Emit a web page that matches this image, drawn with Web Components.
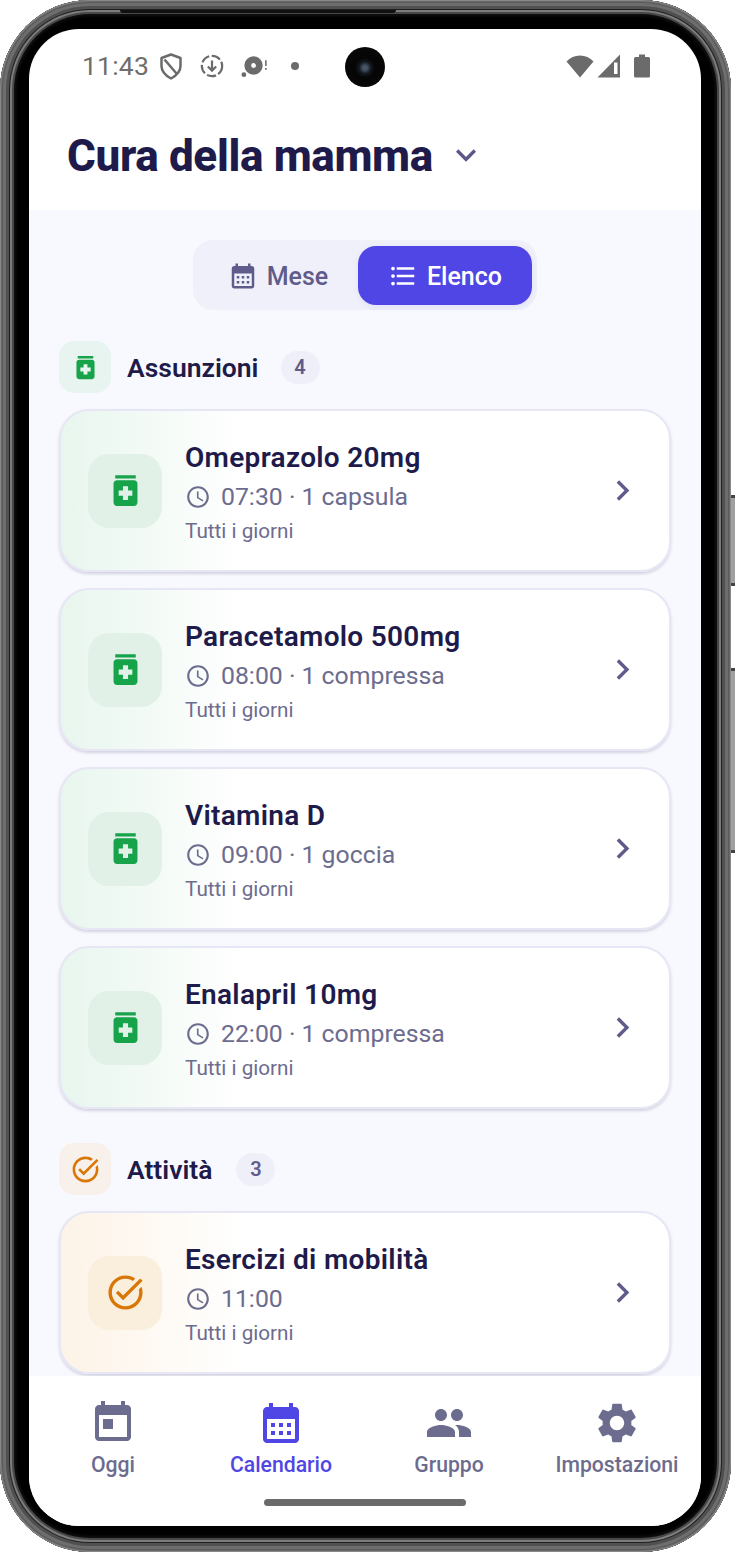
<!DOCTYPE html>
<html lang="it">
<head>
<meta charset="utf-8">
<title>Cura della mamma</title>
<style>
  html, body { margin: 0; background: #fff; }
  body { width: 735px; height: 1553px; overflow: hidden; font-family: Roboto, "Liberation Sans", sans-serif; }
</style>
</head>
<body>
<phone-frame>
  <status-bar></status-bar>
  <app-header>Cura della mamma</app-header>
  <main-area>
    <view-toggle></view-toggle>
    <item-section label="Assunzioni" count="4" tone="green">
      <item-card tone="green" time="07:30 · 1 capsula" note="Tutti i giorni">Omeprazolo 20mg</item-card>
      <item-card tone="green" time="08:00 · 1 compressa" note="Tutti i giorni">Paracetamolo 500mg</item-card>
      <item-card tone="green" time="09:00 · 1 goccia" note="Tutti i giorni">Vitamina D</item-card>
      <item-card tone="green" time="22:00 · 1 compressa" note="Tutti i giorni">Enalapril 10mg</item-card>
    </item-section>
    <item-section label="Attività" count="3" tone="orange">
      <item-card tone="orange" time="11:00" note="Tutti i giorni">Esercizi di mobilità</item-card>
    </item-section>
  </main-area>
  <bottom-nav></bottom-nav>
</phone-frame>

<script>
const ICONS = {
    today: 'M19 3h-1V1h-2v2H8V1H6v2H5c-1.11 0-1.99.9-1.99 2L3 19c0 1.1.89 2 2 2h14c1.1 0 2-.9 2-2V5c0-1.1-.9-2-2-2zm0 16H5V8h14v11zM7 10h5v5H7z',
    calendar: 'M19 4h-1V2h-2v2H8V2H6v2H5c-1.11 0-1.99.9-1.99 2L3 20c0 1.1.89 2 2 2h14c1.1 0 2-.9 2-2V6c0-1.1-.9-2-2-2zm0 16H5V10h14v10zM9 14H7v-2h2v2zm4 0h-2v-2h2v2zm4 0h-2v-2h2v2zm-8 4H7v-2h2v2zm4 0h-2v-2h2v2zm4 0h-2v-2h2v2z',
    people: 'M16 11c1.66 0 2.99-1.34 2.99-3S17.66 5 16 5c-1.66 0-3 1.34-3 3s1.34 3 3 3zm-8 0c1.66 0 2.99-1.34 2.99-3S9.66 5 8 5C6.34 5 5 6.34 5 8s1.34 3 3 3zm0 2c-2.33 0-7 1.17-7 3.5V19h14v-2.5c0-2.33-4.67-3.5-7-3.5zm8 0c-.29 0-.62.02-.97.05 1.16.84 1.97 1.97 1.97 3.45V19h6v-2.5c0-2.33-4.67-3.5-7-3.5z',
    settings: 'M19.14 12.94c.04-.3.06-.61.06-.94 0-.32-.02-.64-.07-.94l2.03-1.58c.18-.14.23-.41.12-.61l-1.92-3.32c-.12-.22-.37-.29-.59-.22l-2.39.96c-.5-.38-1.03-.7-1.62-.94l-.36-2.54c-.04-.24-.24-.41-.48-.41h-3.84c-.24 0-.43.17-.47.41l-.36 2.54c-.59.24-1.13.57-1.62.94l-2.39-.96c-.22-.08-.47 0-.59.22L2.74 8.87c-.12.21-.08.47.12.61l2.03 1.58c-.05.3-.09.63-.09.94s.02.64.07.94l-2.03 1.58c-.18.14-.23.41-.12.61l1.92 3.32c.12.22.37.29.59.22l2.39-.96c.5.38 1.03.7 1.62.94l.36 2.54c.05.24.24.41.48.41h3.84c.24 0 .44-.17.47-.41l.36-2.54c.59-.24 1.13-.56 1.62-.94l2.39.96c.22.08.47 0 .59-.22l1.92-3.32c.12-.22.07-.47-.12-.61l-2.01-1.58zM12 15.6c-1.98 0-3.6-1.62-3.6-3.6s1.62-3.6 3.6-3.6 3.6 1.62 3.6 3.6-1.62 3.6-3.6 3.6z',
    list: 'M4 10.5c-.83 0-1.5.67-1.5 1.5s.67 1.5 1.5 1.5 1.5-.67 1.5-1.5-.67-1.5-1.5-1.5zm0-6c-.83 0-1.5.67-1.5 1.5S3.17 7.5 4 7.5 5.5 6.83 5.5 6 4.83 4.5 4 4.5zm0 12c-.83 0-1.5.68-1.5 1.5s.68 1.5 1.5 1.5 1.5-.68 1.5-1.5-.67-1.5-1.5-1.5zM7 19h14v-2H7v2zm0-6h14v-2H7v2zm0-8v2h14V5H7z',
    pill: 'M6 3h12v2H6zm11 3H7c-1.1 0-2 .9-2 2v11c0 1.1.9 2 2 2h10c1.1 0 2-.9 2-2V8c0-1.1-.9-2-2-2zm-1 9h-2.5v2.5h-3V15H8v-3h2.5V9.5h3V12H16v3z',
    task: 'M22 5.18 10.59 16.6l-4.24-4.24 1.41-1.41 2.83 2.83 10-10L22 5.18zm-2.21 5.04c.13.57.21 1.17.21 1.78 0 4.42-3.58 8-8 8s-8-3.58-8-8 3.58-8 8-8c1.58 0 3.04.46 4.28 1.25l1.44-1.44C16.1 2.67 14.13 2 12 2 6.48 2 2 6.48 2 12s4.48 10 10 10 10-4.48 10-10c0-1.19-.22-2.33-.6-3.39l-1.61 1.61z',
    clock: 'M11.99 2C6.47 2 2 6.48 2 12s4.47 10 9.99 10C17.52 22 22 17.52 22 12S17.52 2 11.99 2zM12 20c-4.42 0-8-3.58-8-8s3.58-8 8-8 8 3.58 8 8-3.58 8-8 8zm.5-13H11v6l5.25 3.15.75-1.23-4.5-2.67z',
    right: 'M10 6 8.59 7.41 13.17 12l-4.58 4.59L10 18l6-6z',
    down: 'M7.41 8.59 12 13.17l4.59-4.58L18 10l-6 6-6-6 1.41-1.41z'
};

const TONES = {
    green: { color: '#16a34a', soft: '#e1f1e8', head: '#e8f4f0', from: '#e8f6ee', icon: 'pill' },
    orange: { color: '#d97706', soft: '#faeedd', head: '#f8f0ea', from: '#fdf3e7', icon: 'task' }
};

// small base class, every element below only gives a template string
class ShadowElement extends HTMLElement {
    constructor() {
        super();
        this.attachShadow({mode: 'open'});
    }
    connectedCallback() {
        this.shadowRoot.innerHTML = this.markup();
    }
}

class AppIcon extends ShadowElement {
    markup() {
        const size = this.getAttribute('size') || 24;
        return `
<style>
    :host { display: inline-flex; width: ${size}px; height: ${size}px; flex: none; }
    svg { width: 100%; height: 100%; display: block; fill: currentColor; }
</style>
<svg viewBox="0 0 24 24"><path d="${ICONS[this.getAttribute('name')]}"/></svg>`;
    }
}

class PhoneFrame extends ShadowElement {
    markup() {
        return `
<style>
    :host { display: block; position: relative; width: 735px; height: 1553px; }
    .body {
        box-sizing: border-box;
        width: 731px;
        height: 1552px;
        padding: 29px 30px 26px 29px;
        background: #000;
        border-radius: 90px;
        box-shadow:
            inset 0 0 2px 1px #9a9a9a,
            inset 0 0 0 3px #585858,
            inset 0 0 0 6px #6e6e6e,
            inset 0 0 0 9px #505050,
            inset 0 0 0 10px #202020,
            inset 0 0 0 12px #7c7c7c,
            inset 0 0 0 14px #484848,
            inset 0 0 3px 16px #111;
    }
    .screen {
        height: 100%;
        border-radius: 50px;
        overflow: hidden;
        background: #fff;
        display: flex;
        flex-direction: column;
    }
    .speaker { position: absolute; left: 120px; top: 10px; width: 276px; height: 3px; background: #111; border-radius: 0 0 3px 3px; }
    .key { position: absolute; left: 731px; width: 4px; background: #a0a0a0; border-top: 3px solid #444; border-bottom: 3px solid #444; box-sizing: border-box; }
    .power { top: 495px; height: 91px; }
    .volume { top: 668px; height: 185px; }
</style>
<div class="body"><div class="screen"><slot></slot></div></div>
<div class="speaker"></div>
<div class="key power"></div>
<div class="key volume"></div>`;
    }
}

class StatusBar extends ShadowElement {
    markup() {
        return `
<style>
    :host { display: flex; position: relative; box-sizing: border-box; height: 72px; flex: none; padding: 2px 51px 0 53px; align-items: center; justify-content: space-between; color: #6b6b6b; }
    .left, .right { display: flex; align-items: center; }
    .time { font: 400 26.500px/1 Roboto, sans-serif; letter-spacing: .2px; color: #6e6e6e; margin-right: 11px; }
    svg { display: block; }
    .cam { position: absolute; left: 316px; top: 18px; width: 40px; height: 40px; border-radius: 50%; background: radial-gradient(circle at 50% 52%, #48566a 0 2px, #141820 6px, #050505 10px, #0a0a0a 100%); }
</style>
<div class="left">
    <span class="time">11:43</span>
    <svg width="22" height="27" viewBox="0 0 22 27" fill="none" stroke="currentColor" stroke-width="2.500" stroke-linejoin="round"><path d="M11 1.500 20.500 5V13c0 5.500-4 9.500-9.500 12.500C5.500 22.500 1.500 18.500 1.500 13V5Z"/><path d="M4.500 6.500 16.500 20.500"/></svg>
    <svg style="margin-left:18px" width="24" height="24" viewBox="0 0 26 26" fill="none" stroke="currentColor" stroke-width="2.400"><circle cx="13" cy="13" r="11" stroke-dasharray="10 2.800"/><path d="M13 7v11M8.500 13.500 13 18l4.500-4.500"/></svg>
    <svg style="margin-left:17px" width="27" height="26" viewBox="0 0 28 26" fill="currentColor"><path fill-rule="evenodd" d="M13 3a9.500 9.500 0 1 1 0 19 9.500 9.500 0 0 1 0-19Zm0 7a2.500 2.500 0 1 0 0 5 2.500 2.500 0 0 0 0-5Z"/><circle cx="3" cy="22" r="2.500"/><rect x="25" y="7" width="1.600" height="6"/><rect x="25" y="15" width="1.600" height="2"/></svg>
    <svg style="margin-left:22px" width="10" height="10" viewBox="0 0 10 10" fill="currentColor"><circle cx="5" cy="5" r="4"/></svg>
</div>
<div class="right">
    <svg width="28" height="24" viewBox="0 0 28 24" fill="currentColor"><path d="M14 23.500 .500 7.500C4 3.500 8.800 1.500 14 1.500s10 2 13.500 6Z"/></svg>
    <svg style="margin-left:3px" width="24" height="24" viewBox="0 0 24 24"><path fill="currentColor" d="M23 .5V23.500H.5Z"/><path fill="#fff" d="M17 8.500h3.500V20H17Z"/></svg>
    <svg style="margin-left:13px" width="16" height="24" viewBox="0 0 16 24" fill="currentColor"><path d="M5 .5h6V3h3.500a1.500 1.500 0 0 1 1.500 1.500V22a1.500 1.500 0 0 1-1.500 1.500h-13A1.500 1.500 0 0 1 0 22V4.500A1.500 1.500 0 0 1 1.500 3H5Z"/></svg>
</div>
<div class="cam"></div>`;
    }
}

class AppHeader extends ShadowElement {
    markup() {
        return `
<style>
    :host { display: flex; box-sizing: border-box; height: 109px; flex: none; padding: 0 0 0 38px; align-items: flex-start; background: #fff; color: #1e1b4b; }
    .row { display: flex; align-items: center; height: 110px; }
    h1 { margin: 0; font: 800 44px/56px Roboto, sans-serif; letter-spacing: -.35px; }
    app-icon { color: #5b5788; margin-left: 13px; margin-top: -3px; }
</style>
<div class="row"><h1><slot></slot></h1><app-icon name="down" size="40"></app-icon></div>`;
    }
}

class MainArea extends ShadowElement {
    markup() {
        return `
<style>
    :host { display: block; flex: 1; min-height: 0; overflow: hidden; background: #f8f9fe; padding: 30px 30px 0; }
</style>
<slot></slot>`;
    }
}

class ViewToggle extends ShadowElement {
    markup() {
        return `
<style>
    :host { display: flex; width: 344px; height: 70px; box-sizing: border-box; margin: 0 auto; padding: 6px 5px 5px; border-radius: 20px; background: #eff0fa; font: 500 25px/1 Roboto, sans-serif; }
    .tab { display: flex; align-items: center; justify-content: center; gap: 9px; border-radius: 18px; color: #5f5b8a; }
    .tab span { padding-top: 1px; }
    .mese { flex: 0 0 160px; }
    .elenco { flex: 1; background: #4f46e5; color: #fff; box-shadow: 0 2px 6px rgba(79,70,229,.08); }
</style>
<div class="tab mese"><app-icon name="calendar" size="30"></app-icon><span>Mese</span></div>
<div class="tab elenco"><app-icon name="list" size="30"></app-icon><span>Elenco</span></div>`;
    }
}

class ItemSection extends ShadowElement {
    markup() {
        const tone = TONES[this.getAttribute('tone')];
        return `
<style>
    :host { display: block; margin-top: 31px; }
    :host([tone="orange"]) { margin-top: 34px; }
    :host([tone="orange"]) .count { margin-left: 24px; }
    .head { display: flex; align-items: center; height: 52px; margin-bottom: 16px; color: #1e1b4b; }
    .badge-icon { width: 52px; height: 52px; border-radius: 15px; display: flex; align-items: center; justify-content: center; background: ${tone.head}; color: ${tone.color}; }
    .label { font: 600 26.500px/1 Roboto, sans-serif; margin-left: 16px; padding-top: 2px; }
    .count { margin-left: 22px; width: 39px; height: 33px; border-radius: 17px; background: #efeffa; color: #5f5b8a; font: 600 20px/33px Roboto, sans-serif; text-align: center; }
    .cards { display: flex; flex-direction: column; gap: 16px; }
</style>
<div class="head">
    <div class="badge-icon"><app-icon name="${tone.icon}" size="31"></app-icon></div>
    <span class="label">${this.getAttribute('label')}</span>
    <span class="count">${this.getAttribute('count')}</span>
</div>
<div class="cards"><slot></slot></div>`;
    }
}

class ItemCard extends ShadowElement {
    markup() {
        const tone = TONES[this.getAttribute('tone')];
        return `
<style>
    :host { display: flex; box-sizing: border-box; height: 163px; padding: 0 26px 0 27px; align-items: center; border: 2px solid #e6e6f4; border-radius: 30px; background: linear-gradient(90deg, ${tone.from} 0%, #fff 30%); box-shadow: 0 2px 3px rgba(60,60,110,.2); }
    .thumb { width: 74px; height: 74px; flex: none; border-radius: 21px; background: ${tone.soft}; color: ${tone.color}; display: flex; align-items: center; justify-content: center; }
    .text { flex: 1; margin: 4px 0 0 23px; min-width: 0; }
    .name { font: 600 28px/34px Roboto, sans-serif; letter-spacing: .3px; color: #1e1b4b; }
    .time { display: flex; align-items: center; margin-top: 7px; height: 30px; font: 400 24.800px/30px Roboto, sans-serif; color: #6c6c8e; }
    .time app-icon { margin-right: 10px; }
    .note { margin-top: 6px; font: 400 20.700px/26px Roboto, sans-serif; color: #6c6c8e; }
    .go { color: #5f5b8a; }
</style>
<div class="thumb"><app-icon name="${tone.icon}" size="41"></app-icon></div>
<div class="text">
    <div class="name"><slot></slot></div>
    <div class="time"><app-icon name="clock" size="26"></app-icon><span>${this.getAttribute('time')}</span></div>
    <div class="note">${this.getAttribute('note')}</div>
</div>
<app-icon class="go" name="right" size="41"></app-icon>`;
    }
}

class BottomNav extends ShadowElement {
    markup() {
        const items = [
            ['today', 'Oggi', false],
            ['calendar', 'Calendario', true],
            ['people', 'Gruppo', false],
            ['settings', 'Impostazioni', false]
        ];
        const cells = items.map(([icon, label, on]) => `
<div class="cell${on ? ' on' : ''}"><app-icon name="${icon}" size="48"></app-icon><span>${label}</span></div>`).join('');
        return `
<style>
    :host { display: block; position: relative; box-sizing: border-box; height: 150px; flex: none; padding-top: 23px; background: #fff; }
    .row { display: grid; grid-template-columns: repeat(4, 168px); }
    .cell { display: flex; flex-direction: column; align-items: center; color: #6c6c8e; font: 500 21.200px/28px Roboto, sans-serif; gap: 4px; white-space: nowrap; }
    .on { color: #4f46e5; }
    .home { position: absolute; left: 235px; bottom: 20px; width: 202px; height: 7px; border-radius: 4px; background: #6b6b6b; }
</style>
<div class="row">${cells}</div>
<div class="home"></div>`;
    }
}

customElements.define('app-icon', AppIcon);
customElements.define('phone-frame', PhoneFrame);
customElements.define('status-bar', StatusBar);
customElements.define('app-header', AppHeader);
customElements.define('main-area', MainArea);
customElements.define('view-toggle', ViewToggle);
customElements.define('item-section', ItemSection);
customElements.define('item-card', ItemCard);
customElements.define('bottom-nav', BottomNav);
</script>
</body>
</html>
